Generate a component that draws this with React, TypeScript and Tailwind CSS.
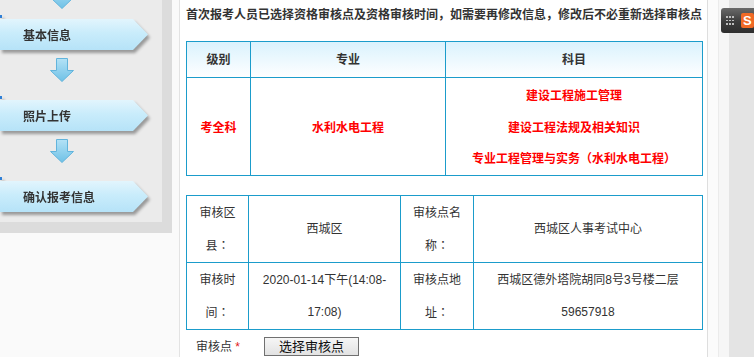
import React from 'react'

const FONT = 'font-["Liberation_Sans","Noto_Sans_CJK_SC",sans-serif]'
const CJK = 'font-["Noto_Sans_CJK_SC",sans-serif]'

const steps = ['基本信息', '照片上传', '确认报考信息']

const DownArrow = () => (
  <svg width="24" height="24" viewBox="0 0 24 24">
    <defs>
      <linearGradient id="arrowFill" x1="0" y1="0" x2="0" y2="1">
        <stop offset="0" stopColor="#b4e2f6" />
        <stop offset="1" stopColor="#6fc1e6" />
      </linearGradient>
    </defs>
    <path
      d="M6.5 0.5 H17.5 V12.5 H23.5 L12 23.5 L0.5 12.5 H6.5 Z"
      fill="url(#arrowFill)"
      stroke="#62b4dc"
      strokeWidth="1"
    />
  </svg>
)

const StepBanner = ({ label }: { label: string }) => (
  <div className="relative h-[31px] w-[148px] drop-shadow-[2px_3px_1.5px_rgba(0,0,0,0.35)]">
    <div className="absolute left-0 top-[-4px] h-[3px] w-[2px] bg-[#2f7fd6]" />
    <div className="flex h-full items-center bg-[linear-gradient(180deg,#e2f5fd_0%,#c9ecfb_45%,#b6e3f8_100%)] pl-[23px] pt-[3px] [clip-path:polygon(0_0,133px_0,148px_15.5px,133px_31px,0_31px)]">
      <span className="text-[12px] font-bold leading-none text-[#333]">{label}</span>
    </div>
  </div>
)

const Sidebar = () => (
  <div className="h-[233px] w-[172px] bg-[#dcdcdc] pb-[11px] pr-[10px]">
    <div className="flex h-full flex-col bg-[#ebebeb]">
      <div className="flex h-[9px] items-end justify-center overflow-hidden pr-[39px]">
        <div className="shrink-0">
          <DownArrow />
        </div>
      </div>
      {steps.map((label, index) => (
        <div key={label} className="mt-[10px] flex flex-col">
          <StepBanner label={label} />
          {index < steps.length - 1 && (
            <div className="mb-[8px] mt-[8px] flex justify-center pr-[39px]">
              <DownArrow />
            </div>
          )}
        </div>
      ))}
    </div>
  </div>
)

const cell = 'border border-[#1b9ccb] text-center align-middle'

// centred full-width colon, as in the original page
const Colon = () => <span className='font-["Noto_Sans_CJK_TC",sans-serif]'>：</span>

const SubjectTable = () => (
  <table className="w-[516px] table-fixed border-collapse">
    <colgroup>
      <col className="w-[64px]" />
      <col className="w-[195px]" />
      <col className="w-[257px]" />
    </colgroup>
    <thead>
      <tr className="h-[36px] bg-[linear-gradient(180deg,#daf2fd_0%,#ffffff_100%)] text-[12px] font-bold text-[#333]">
        <th className={cell}>级别</th>
        <th className={cell}>专业</th>
        <th className={cell}>科目</th>
      </tr>
    </thead>
    <tbody>
      <tr className={`h-[98px] text-[12px] font-bold text-[#ff0000] ${CJK}`}>
        <td className={cell}>考全科</td>
        <td className={cell}>水利水电工程</td>
        <td className={`${cell} leading-[31.5px]`}>
          <div>建设工程施工管理</div>
          <div>建设工程法规及相关知识</div>
          <div>专业工程管理与实务（水利水电工程）</div>
        </td>
      </tr>
    </tbody>
  </table>
)

const SiteTable = () => (
  <table className="w-[516px] table-fixed border-collapse text-[12px] leading-[32px] text-[#333]">
    <colgroup>
      <col className="w-[62px]" />
      <col className="w-[152px]" />
      <col className="w-[73px]" />
      <col className="w-[229px]" />
    </colgroup>
    <tbody>
      <tr className="h-[67px]">
        <td className={cell}>
          审核区
          <br />
          县<Colon />
        </td>
        <td className={cell}>西城区</td>
        <td className={cell}>
          审核点名
          <br />
          称<Colon />
        </td>
        <td className={cell}>西城区人事考试中心</td>
      </tr>
      <tr className="h-[67px]">
        <td className={cell}>
          审核时
          <br />
          间<Colon />
        </td>
        <td className={cell}>
          2020-01-14下午(14:08-
          <br />
          17:08)
        </td>
        <td className={cell}>
          审核点地
          <br />
          址<Colon />
        </td>
        <td className={cell}>
          西城区德外塔院胡同8号3号楼二层
          <br />
          59657918
        </td>
      </tr>
    </tbody>
  </table>
)

const SogouBadge = () => (
  <div className="absolute right-0 top-[8px] flex h-[25px] w-[33px] items-center rounded-l-[3px] bg-[linear-gradient(180deg,#6a6a6a_0%,#3c3c3c_55%,#2e2e2e_100%)] pl-[5px]">
    <div className="grid grid-cols-3 gap-[2px]">
      {Array.from({ length: 9 }).map((_, i) => (
        <div key={i} className="h-[1.5px] w-[1.5px] bg-[#bdbdbd]" />
      ))}
    </div>
    <div className="ml-[7px] flex h-[15px] w-[15px] items-center justify-center rounded-[2px] bg-[#f06a26] text-[13px] font-bold leading-none text-white">
      S
    </div>
  </div>
)

export default function App() {
  return (
    <div className={`flex h-[357px] w-[754px] overflow-hidden bg-white ${FONT}`}>
      <div className="w-[180px] shrink-0 border-r border-[#e3e3e3] bg-[#fafafa]">
        <Sidebar />
      </div>
      <div className="w-[527px] shrink-0 pl-[6px]">
        <p className={`pt-[4px] text-[12px] font-bold leading-[20px] whitespace-nowrap text-[#333] ${CJK}`}>
          首次报考人员已选择资格审核点及资格审核时间，如需要再修改信息，修改后不必重新选择审核点
        </p>
        <div className="mt-[17px]">
          <SubjectTable />
        </div>
        <div className="mt-[19px]">
          <SiteTable />
        </div>
        <div className="mt-[6px] flex items-center pl-[10px]">
          <div className="w-[68px] pt-[2px] text-[12px] text-[#333]">
            审核点 <span className="text-[#e02020]">*</span>
          </div>
          <button className="h-[19px] w-[95px] border border-[#707070] bg-[linear-gradient(180deg,#f6f6f6_0%,#e2e2e2_100%)] text-[13px] leading-none text-[#111]">
            选择审核点
          </button>
        </div>
      </div>
      <div className="relative flex flex-1">
        <div className="w-[11px] border-l border-[#dedede] bg-[#fbfbfb]" />
        <div className="w-[11px] border-l border-[#ebebeb] bg-[#f6f6f6]" />
        <div className="flex-1 bg-[#e4e4e4]" />
        <SogouBadge />
      </div>
    </div>
  )
}
